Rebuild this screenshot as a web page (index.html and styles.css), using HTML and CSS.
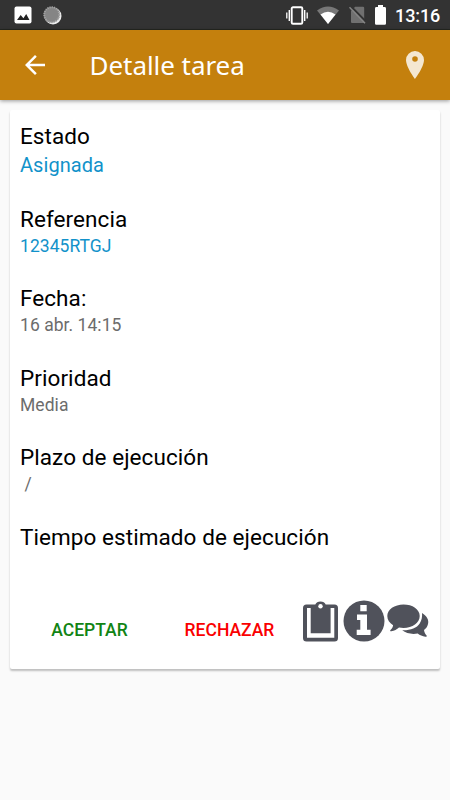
FILE: index.html
```html
<!DOCTYPE html>
<html lang="es">
<head>
<meta charset="utf-8">
<title>Detalle tarea</title>
<link rel="stylesheet" href="styles.css">
</head>
<body>
<div class="statusbar">
  <div class="notifications">
    <svg width="18" height="18" viewBox="0 0 18 18"><rect x=".5" y=".5" width="17" height="17" rx="2" fill="#fff"/><path d="M3 14l3.700-5 2.700 3.200L12.200 8l3.300 6z" fill="#222"/></svg>
    <svg width="19" height="19" viewBox="0 0 19 19"><circle cx="10" cy="10" r="8.500" fill="#eee"/><circle cx="8.700" cy="8.700" r="8" fill="#858585"/><circle cx="8.700" cy="8.700" r="7.500" fill="none" stroke="#a5a5a5" stroke-width="2" stroke-dasharray="1 1.200"/></svg>
  </div>
  <div class="system">
    <svg width="22" height="19" viewBox="0 0 22 19"><g fill="none" stroke="#fff"><rect x="5.700" y="1.200" width="10.600" height="16.600" rx="1.300" stroke-width="1.900"/><path d="M3.300 4v11M18.700 4v11" stroke-width="1.400"/><path d="M.8 6.500v6M21.200 6.500v6" stroke-width="1.300"/></g></svg>
    <svg class="wifi" width="22" height="18" viewBox="0 0 22 18"><path d="M0 4.500Q11-3.700 22 4.500L11 18z" fill="#777"/><path d="M3.500 8.600Q11 3 18.500 8.600L11 18z" fill="#fff"/></svg>
    <svg class="sim" width="17" height="18" viewBox="0 0 17 18"><path d="M6.200.8H14q1.200 0 1.200 1.200v14q0 1-1 1H3q-1 0-1-1V5z" fill="#707070"/><path d="M1.600 0L17 15.800" stroke="#333" stroke-width="2"/><path d="M.5 1.300L16 17.300" stroke="#858585" stroke-width="1.500"/></svg>
    <svg class="battery" width="11" height="20" viewBox="0 0 11 20"><path d="M3 0h5v2h1.600Q11 2 11 3.400v15q0 1.300-1.300 1.300H1.300Q0 19.700 0 18.400v-15Q0 2 1.400 2H3z" fill="#fff"/></svg>
    <span class="clock">13:16</span>
  </div>
</div>
<header class="toolbar">
  <svg class="back" width="20" height="20" viewBox="4 4 16 16"><path d="M20 11H7.830l5.590-5.590L12 4l-8 8 8 8 1.410-1.410L7.830 13H20z" fill="#fff"/></svg>
  <h1>Detalle tarea</h1>
  <svg class="pin" width="18" height="28" viewBox="0 0 18 28"><path fill-rule="evenodd" d="M9 0a9 9 0 0 0-9 9c0 7 9 19 9 19s9-12 9-19a9 9 0 0 0-9-9zm0 5.200a2.800 2.800 0 1 1 0 5.600 2.800 2.800 0 0 1 0-5.600z" fill="#f4e7d1"/></svg>
</header>
<main class="card">
  <dl>
    <div class="field state"><dt>Estado</dt><dd class="blue">Asignada</dd></div>
    <div class="field"><dt>Referencia</dt><dd class="blue">12345RTGJ</dd></div>
    <div class="field"><dt>Fecha:</dt><dd>16 abr. 14:15</dd></div>
    <div class="field"><dt>Prioridad</dt><dd>Media</dd></div>
    <div class="field"><dt>Plazo de ejecución</dt><dd class="slash">/</dd></div>
    <div class="field"><dt>Tiempo estimado de ejecución</dt></div>
  </dl>
  <div class="actions">
    <button class="accept">ACEPTAR</button>
    <button class="reject">RECHAZAR</button>
    <div class="icons">
      <svg width="35" height="42" viewBox="0 0 35 42"><path fill-rule="evenodd" d="M3.500 4.500H12.300a5.500 4.500 0 0 1 10.400 0H31.500Q35 4.500 35 8V38Q35 41.500 31.500 41.500H3.500Q0 41.500 0 38V8Q0 4.500 3.500 4.500zM4 8V37.800H31.300V8H27.600V33.300H7.700V8z" fill="#50525b"/><circle cx="17.500" cy="6.300" r="2.200" fill="#fff"/></svg>
      <svg width="42" height="42" viewBox="0 0 42 42"><circle cx="21" cy="21" r="20.500" fill="#50525b"/><path d="M17.300 5h6.400v6.200h-6.400zM14 14.500h10v15.300h3.600v5.200H13.700v-5.200h3.600V20H14z" fill="#fff"/></svg>
      <svg class="chat" width="42" height="34" viewBox="0 0 42 34"><path d="M35 9c5 3 7 7 6 11-.5 2.600-2 4.500-4 6 .3 2.600 1.400 4.400 2.600 5.500.5 1-.2 1.300-1.200 1.200-3-.4-5.600-1.500-7.700-3.200-6 1.100-11.500-.2-15.500-3.200 8.500.2 14.500-2.200 17.500-6.800 2-3.100 2.700-6.800 2.300-10.500z" fill="#50525b"/><path d="M16.500.5C7.500.5.3 5.600.3 12c0 3.800 2.200 7 5.800 9.200-.3 2-1.200 3.600-2.600 4.800-.7.900-.2 1.300.8 1.200 3-.3 5.700-1.600 7.700-3.600 1.500.3 2.900.4 4.500.4 9 0 16.200-5.300 16.200-12S25.500.5 16.500.5z" fill="#50525b"/></svg>
    </div>
  </div>
</main>
</body>
</html>
```
FILE: styles.css
```css
* { box-sizing: border-box; }
body { margin: 0; height: 800px; overflow: hidden; background: #fafafa; font-family: Roboto, sans-serif; color: #000; }
svg { display: block; flex: none; }
.statusbar { height: 30px; background: #333; border-bottom: 1px solid #252720; display: flex; justify-content: space-between; padding: 0 9px 0 14px; color: #fff; }
.notifications { display: flex; align-items: center; gap: 11px; padding-top: 1px; }
.system { display: flex; align-items: center; padding-top: 1px; }
.wifi { margin-left: 9px; }
.sim { margin-left: 10px; }
.battery { margin-left: 9px; }
.clock { margin-left: 9px; width: 46px; font-size: 18px; font-weight: 500; line-height: 30px; padding-top: 1px; letter-spacing: -.1px; white-space: nowrap; }
.toolbar { height: 70px; background: #c4800d; display: flex; align-items: center; padding: 0 26px 0 25px; box-shadow: 0 1px 4px rgba(0,0,0,.4); }
h1 { margin: 0 0 0 44.5px; flex: 1; font: 400 26px/36px "Noto Sans", sans-serif; letter-spacing: -.05px; color: #fff; white-space: nowrap; }
.card { margin: 10px 10px 0; height: 559px; background: #fff; border-radius: 2px; padding: 13px 10px 0; box-shadow: 0 2px 2px rgba(0,0,0,.24); display: flex; flex-direction: column; }
dl { margin: 0; }
.field { height: 79.5px; }
.field.state { height: 82.5px; }
dt { font-size: 22.5px; line-height: 27px; letter-spacing: .07px; }
dd { margin: 0; font-size: 17.5px; line-height: 26px; letter-spacing: .05px; color: #6c6c6c; }
.state dd { font-size: 20px; line-height: 31px; }
dd.blue { color: #1292ca; }
.slash { padding-left: 4.5px; }
.actions { display: flex; align-items: flex-start; }
.field:last-child { height: 76px; }
button { border: 0; padding: 0; background: none; font: 500 17.5px/61px Roboto, sans-serif; text-align: center; }
.accept { width: 139px; color: #118414; }
.reject { width: 141px; color: #fa0000; }
.icons { display: flex; margin-left: 3px; gap: 5px; }
.chat { margin: 4px 0 0 -3px; }
```
